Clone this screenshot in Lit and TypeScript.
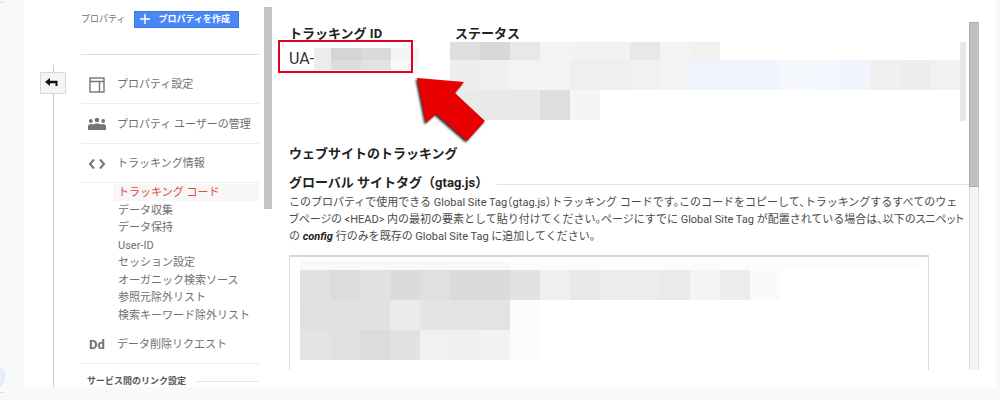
import { LitElement, html, css, svg } from "lit";
import { customElement } from "lit/decorators.js";

type Cell = [x: number, y: number, w: number, h: number, fill: string];

const idCells: Cell[] = [
  [0, 0, 17, 22, "#ececec"], [17, 0, 30, 12, "#d5d5d5"], [17, 12, 30, 10, "#dcdcdc"],
  [47, 0, 30, 12, "#dadada"], [47, 12, 30, 10, "#e2e2e2"], [77, 0, 28, 12, "#f5f5f5"],
  [77, 12, 28, 10, "#f8f8f8"],
];

const statusCells: Cell[] = [
  [0, 0, 30, 18, "#dfdfdf"], [30, 0, 30, 18, "#d8d8d8"], [60, 0, 30, 18, "#e8e8e8"],
  [90, 0, 30, 18, "#f4f4f4"], [120, 0, 60, 18, "#f2f2f2"], [180, 0, 30, 18, "#e8e8e8"],
  [210, 0, 30, 18, "#f4f4f4"], [240, 0, 30, 18, "#f1f1f1"],
  [0, 18, 30, 30, "#eeeeee"], [30, 18, 30, 30, "#f0f0f0"], [60, 18, 60, 30, "#f3f3f3"],
  [120, 18, 60, 30, "#efefef"], [180, 18, 30, 30, "#f1f1f1"], [210, 18, 30, 30, "#f3f3f3"],
  [240, 18, 30, 30, "#eff3fc"], [270, 18, 60, 30, "#eff4fd"], [330, 18, 30, 30, "#f4f8fd"],
  [360, 18, 30, 30, "#f2f6fd"], [390, 18, 30, 30, "#f0f5fe"], [420, 18, 30, 30, "#f0f0f0"],
  [450, 18, 30, 30, "#ededed"], [480, 18, 30, 30, "#f1f1f1"],
  [0, 48, 30, 30, "#ebebeb"], [30, 48, 60, 30, "#e9e9e9"], [90, 48, 30, 30, "#dedede"],
  [120, 48, 30, 30, "#f5f5f5"], [510, 0, 6, 79, "#e8e8e8"],
];

const codeCells: Cell[] = [
  [0, 0, 210, 9, "#f9f9f9"], [210, 0, 410, 9, "#fcfcfc"],
  [0, 9, 30, 30, "#e2e2e2"], [30, 9, 30, 30, "#dcdcdc"], [60, 9, 30, 30, "#e2e2e2"],
  [90, 9, 30, 30, "#dbdbdb"], [120, 9, 30, 30, "#e0e0e0"], [150, 9, 60, 30, "#dbdbdb"],
  [210, 9, 30, 30, "#e2e2e2"], [240, 9, 30, 30, "#efefef"], [270, 9, 30, 30, "#e8e8e8"],
  [300, 9, 60, 30, "#ececec"], [360, 9, 30, 30, "#eaeaea"], [390, 9, 30, 30, "#f4f4f4"],
  [420, 9, 30, 30, "#ededed"], [450, 9, 30, 30, "#fafafa"],
  [0, 39, 30, 30, "#e0e0e0"], [30, 39, 60, 30, "#e1e1e1"], [90, 39, 30, 30, "#ebebeb"],
  [120, 39, 30, 30, "#e4e4e4"], [150, 39, 60, 30, "#e3e3e3"], [210, 39, 30, 30, "#fcfcfc"],
  [0, 69, 30, 30, "#e4e4e4"], [30, 69, 30, 30, "#e1e1e1"], [60, 69, 30, 30, "#dcdcdc"],
  [90, 69, 30, 30, "#e2e2e2"], [120, 69, 30, 30, "#f1f1f1"], [150, 69, 30, 30, "#efefef"],
  [180, 69, 30, 30, "#f2f2f2"], [210, 69, 30, 30, "#fbfbfb"],
];

const mosaic = (cells: Cell[], w: number, h: number) => html`
  <svg class="mosaic" width=${w} height=${h} viewBox="0 0 ${w} ${h}" shape-rendering="crispEdges" aria-hidden="true">
    ${cells.map(([x, y, cw, ch, f]) => svg`<rect x=${x} y=${y} width=${cw} height=${ch} fill=${f}></rect>`)}
  </svg>`;

const trackingLinks = [
  "トラッキング コード", "データ収集", "データ保持", "User-ID",
  "セッション設定", "オーガニック検索ソース", "参照元除外リスト", "検索キーワード除外リスト",
];

const settingsIcon = html`<svg width="16" height="16" viewBox="0 0 16 16" fill="none" stroke="#757575" stroke-width="1.4" aria-hidden="true">
  <rect x="1" y="1" width="14" height="14"/><path d="M1 4.5H15M10.5 4.5V15"/></svg>`;
const usersIcon = html`<svg width="20" height="14" viewBox="0 0 20 14" fill="#757575" aria-hidden="true">
  <circle cx="10" cy="3" r="2.3"/><circle cx="3.8" cy="4" r="1.9"/><circle cx="16.2" cy="4" r="1.9"/>
  <path d="M1 13V9.300C1 7.700 2.800 7 4.600 7.100L6 7.600C7 6.800 8.500 6.400 10 6.400S13 6.800 14 7.600L15.400 7.100C17.200 7 19 7.700 19 9.300V13Z"/></svg>`;
const codeIcon = html`<svg width="18" height="12" viewBox="0 0 18 12" fill="none" stroke="#757575" stroke-width="2" aria-hidden="true">
  <path d="M6 1.500L2 6L6 10.500M12 1.500L16 6L12 10.500"/></svg>`;

@customElement("app-root")
export class AppRoot extends LitElement {
  static styles = css`
    :host {
      display: block;
      position: relative;
      min-height: 400px;
      box-sizing: border-box;
      padding: 0 4px 13px 24px;
      overflow: hidden;
      background: #f8f9fb;
      color: #6f6f6f;
      font: 11px/17px Roboto, "Noto Sans CJK JP", sans-serif;
    }
    * { box-sizing: border-box; }
    a { color: inherit; text-decoration: none; }
    ul { list-style: none; margin: 0; padding: 0; }
    h1, h2, p { margin: 0; }
    svg { display: block; }
    .bubble {
      position: absolute; left: -20px; top: 364px;
      width: 25px; height: 25px; border-radius: 50%;
      background: #e8effd; border: 1px solid #d9e3f8;
    }
    .tick { position: absolute; left: 0; width: 5px; height: 1px; background: #dfe1e4; }
    .tick-top { top: 2px; }
    .tick-bottom { top: 392px; }
    .panel {
      display: grid;
      grid-template-columns: 57px 178px 13px minmax(0, 1fr) 10px;
      height: 387px;
      padding-right: 17px;
      background: #fff;
      overflow: hidden;
    }
    .rail { display: flex; flex-direction: column; padding: 65px 15px 0 16px; }
    .rail::before, .rail::after { content: ""; width: 1px; margin-left: 13px; background: #ccc; }
    .rail::before { height: 7px; }
    .rail::after { flex: 1; }
    .back {
      display: grid; place-items: center;
      width: 26px; height: 22px; padding: 0 3px 2px 0;
      border: 1px solid #d8d8d8; border-radius: 1px; background: #f5f5f5;
    }
    .head { display: flex; align-items: center; gap: 9px; height: 55px; padding-bottom: 16px; border-bottom: 1px solid #ddd; font-size: 9px; white-space: nowrap; }
    .create {
      display: flex; align-items: center; gap: 8px;
      height: 17px; padding: 0 8px 0 5px; border: 1px solid #3b78e7;
      background: #4a88f5; color: #fff; font: inherit; font-weight: 700; line-height: 15px;
    }
    .item {
      display: grid; grid-template-columns: 32px 1fr; align-items: center; gap: 4px;
      height: 39px; padding-top: 1px; border-bottom: 1px solid #ececec; white-space: nowrap;
    }
    .item:first-child { height: 49px; padding-top: 11px; }
    .item .glyph { display: grid; place-items: center; }
    .dd { font-size: 13px; font-weight: 700; }
    .item.tall { height: 40px; }
    .sub { display: grid; height: 141px; padding-top: 1px; align-content: space-between; margin-left: 32px; }
    .sub a { display: block; padding-left: 5px; white-space: nowrap; }
    .sub .current { background: #f7f7f7; color: #e04a3f; }
    .links { display: flex; align-items: center; gap: 9px; margin: 9px 0 0 6px; font-size: 9px; font-weight: 700; color: #555; white-space: nowrap; }
    .links::after { content: ""; flex: 1; height: 1px; background: #e8e8e8; }
    .thumb { width: 8px; height: 202px; margin: 7px 0 0 5px; background: #c4c4c4; }
    .main { height: 370px; padding: 25px 0 0 17px; overflow: hidden; color: #4a4a4a; }
    .facts { display: grid; grid-template-columns: 161px 1fr; height: 120px; }
    h1, h2 { font-size: 13px; line-height: 17px; font-weight: 700; color: #222; white-space: nowrap; }
    .id { display: flex; margin-top: 6px; font-size: 16px; line-height: 22px; color: #333; }
    .status h2 { padding-left: 5px; }
    .mosaic { flex: none; }
    .sitetag { display: flex; align-items: center; gap: 9px; margin-top: 12px; }
    .sitetag::after { content: ""; flex: 1; height: 1px; margin-top: 4px; background: #e2e2e2; }
    .note { margin-top: 3px; white-space: nowrap; font-feature-settings: "halt"; }
    .note em { color: #222; font-weight: 700; }
    .tight { font-feature-settings: "palt"; }
    .code { height: 130px; margin: 10px 40px 0 0; padding: 4px 10px; border: 1px solid #ddd; border-top: 2px solid #d6d6d6; overflow: hidden; }
    .bar { height: 348px; margin-top: 22px; background: #f3f3f3; border: solid #ddd; border-width: 0 1px; }
    .bar::before { content: ""; display: block; height: 163px; margin: 0 -1px; background: #c1c1c1; border: solid #aaa; border-width: 1px 0 1px 1px; }
    .frame { position: absolute; left: 278px; top: 40px; width: 135px; height: 33px; border: 2px solid #e2001a; }
    .arrow { position: absolute; left: 410px; top: 72px; }
  `;

  render() {
    return html`
      <span class="tick tick-top"></span>
      <span class="bubble"></span>
      <span class="tick tick-bottom"></span>
      <div class="panel">
        <div class="rail">
          <button class="back" aria-label="戻る">
            <svg width="13" height="9" viewBox="0 0 13 9" aria-hidden="true">
              <path d="M0 4L5 0V2.700H12.500V8H10.500V5.300H5V8Z" fill="#111"/></svg>
          </button>
        </div>
        <nav>
          <div class="head">
            <span>プロパティ</span>
            <button class="create">
              <svg width="10" height="10" viewBox="0 0 10 10" aria-hidden="true"><path d="M5 0V10M0 5H10" stroke="#fff" stroke-width="1.500"/></svg>
              <span>プロパティを作成</span>
            </button>
          </div>
          <div>
            <a class="item" href="#"><span class="glyph">${settingsIcon}</span>プロパティ設定</a>
            <a class="item tall" href="#"><span class="glyph">${usersIcon}</span>プロパティ ユーザーの管理</a>
            <a class="item" href="#"><span class="glyph">${codeIcon}</span>トラッキング情報</a>
          </div>
          <ul class="sub">
            ${trackingLinks.map((t, i) => html`<li><a class=${i === 0 ? "current" : ""} href="#">${t}</a></li>`)}
          </ul>
          <a class="item tall" href="#"><span class="glyph dd">Dd</span>データ削除リクエスト</a>
          <div class="links">サービス間のリンク設定</div>
        </nav>
        <div class="thumb"></div>
        <main class="main">
          <div class="facts">
            <section>
              <h2>トラッキング ID</h2>
              <div class="id"><span>UA-</span>${mosaic(idCells, 105, 22)}</div>
            </section>
            <section class="status">
              <h2>ステータス</h2>
              ${mosaic(statusCells, 516, 79)}
            </section>
          </div>
          <h1>ウェブサイトのトラッキング</h1>
          <h2 class="sitetag">グローバル サイトタグ（gtag.js）</h2>
          <p class="note">このプロパティで使用できる Global Site Tag（gtag.js）トラッキング コードです。このコードをコピーして、トラッキングするすべてのウェ<br><span class="tight">ブページの</span> &lt;HEAD&gt; 内の最初の要素として貼り付けてください。ページにすでに Global Site Tag が配置されている場合は、<span class="tight">以下のスニペット</span><br>の <em>config</em> 行のみを既存の Global Site Tag に追加してください。</p>
          <div class="code">${mosaic(codeCells, 620, 99)}</div>
        </main>
        <div class="bar"></div>
      </div>
      <div class="frame"></div>
      <svg class="arrow" width="80" height="74" viewBox="410 72 80 74" aria-hidden="true">
        <defs><filter id="soft"><feGaussianBlur stdDeviation="0.8"/></filter></defs>
        <path d="M417 78L464 82L455 93L485 121L467 141L436 114L426 123Z" transform="translate(-1.500 1.500)" fill="#333" filter="url(#soft)"/>
        <path d="M417 78L464 82L455 93L485 121L467 141L436 114L426 123Z" fill="#e80000"/>
      </svg>
    `;
  }
}
